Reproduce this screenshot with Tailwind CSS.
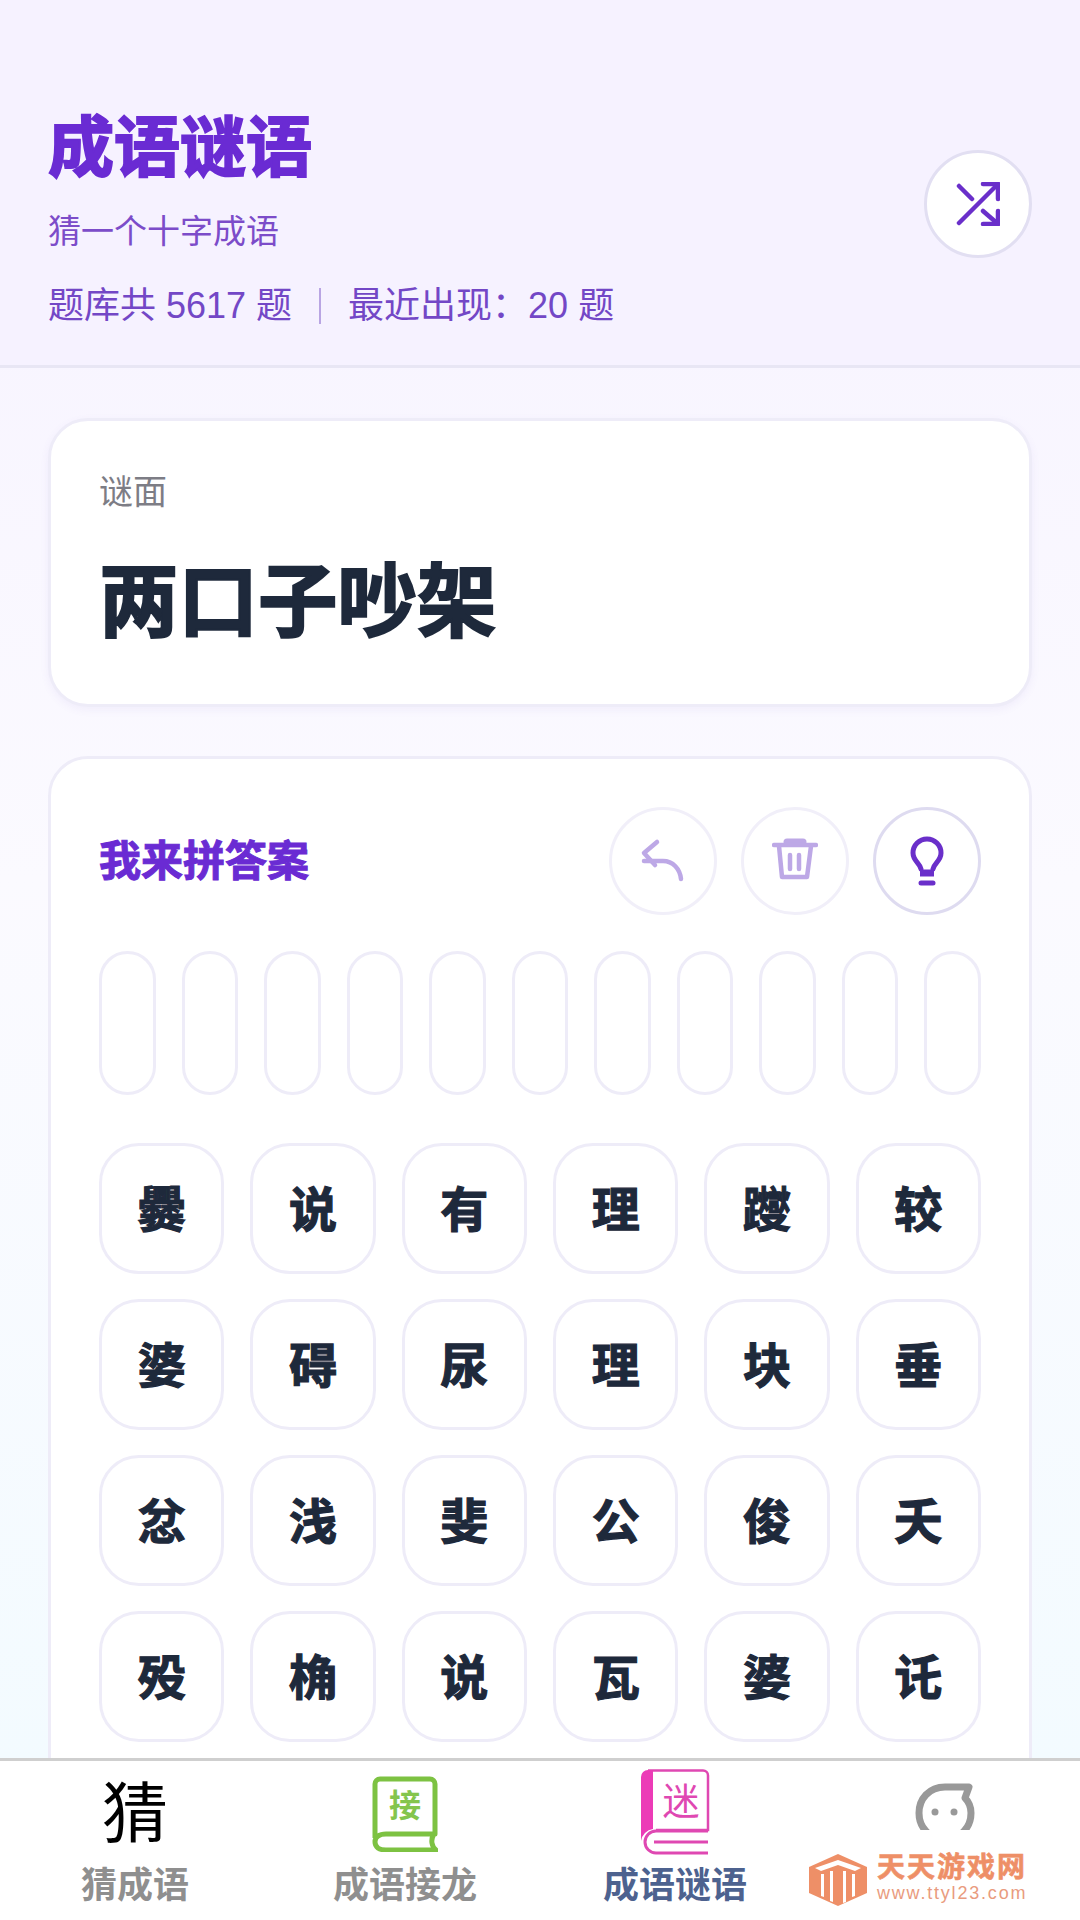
<!doctype html>
<html lang="zh-CN">
<head>
<meta charset="utf-8">
<script src="https://cdn.jsdelivr.net/npm/@tailwindcss/browser@4"></script>
</head>
<body class="m-0">
<div class="w-[1080px] h-[1920px] flex flex-col overflow-hidden font-['Liberation_Sans','Noto_Sans_CJK_SC',sans-serif] bg-white">
  <div class="flex-1 min-h-0 overflow-hidden bg-gradient-to-b from-[#f6f2ff] via-[#fbfaff] to-[#f3fbff]">
    <header class="h-[368px] bg-[#f6f2ff] border-b-[3px] border-[#e8e6f4] px-[48px] pt-[108px] flex justify-between">
      <div>
        <h1 class="text-[66px] leading-[80px] font-bold text-[#6a2bd3] [-webkit-text-stroke:2px_#6a2bd3]">成语谜语</h1>
        <p class="mt-[22px] text-[33px] leading-[44px] text-[#7c4cc9]">猜一个十字成语</p>
        <div class="mt-[30px] flex items-center text-[36px] leading-[44px] text-[#7347c6]">
          <span>题库共 5617 题</span>
          <span class="mx-[27px] w-[2px] h-[36px] bg-[#b9a5e3]"></span>
          <span>最近出现：20 题</span>
        </div>
      </div>
      <button class="mt-[42px] w-[108px] h-[108px] rounded-full bg-white border-[3px] border-[#e2dff2] flex items-center justify-center">
        <svg class="w-[44px] h-[44px]" viewBox="0 0 44 44" fill="none" stroke="#6a2fca" stroke-width="4.5" stroke-linecap="round" stroke-linejoin="round"><path d="M27 2h15v15"/><path d="M3 41 42 2"/><path d="M3 4l13 13"/><path d="M27 29l15 13"/><path d="M42 29v13H27"/></svg>
      </button>
    </header>
    <div class="px-[48px] pt-[50px]">
      <section class="h-[289px] rounded-[40px] bg-white border-[3px] border-[#eeecf8] shadow-[0_3px_8px_rgba(110,90,200,0.07)] px-[48px] pt-[49px]">
        <div class="text-[34px] leading-[44px] text-[#7d7d85]">谜面</div>
        <div class="mt-[39px] text-[79.5px] leading-[100px] font-bold text-[#1e293b] [-webkit-text-stroke:2px_#1e293b]">两口子吵架</div>
      </section>
      <section class="mt-[49px] rounded-[40px] bg-white border-[3px] border-[#eeecf8] px-[48px] pt-[48px] h-[1200px]">
        <div class="flex items-center justify-between h-[108px]">
          <h2 class="text-[42px] font-bold text-[#6a2bd3] [-webkit-text-stroke:1px_#6a2bd3]">我来拼答案</h2>
          <div class="flex gap-[24px]">
            <button class="w-[108px] h-[108px] rounded-full bg-white border-[3px] border-[#f1eff9] flex items-center justify-center">
              <svg class="w-[46px] h-[46px]" viewBox="0 0 46 46" fill="none" stroke="#bda8e6" stroke-width="4.5" stroke-linecap="round" stroke-linejoin="round"><path d="M17 4 4 15l11 12"/><path d="M4 23h19c10 0 17 8 18 18"/></svg>
            </button>
            <button class="w-[108px] h-[108px] rounded-full bg-white border-[3px] border-[#f1eff9] flex items-center justify-center">
              <svg class="w-[46px] h-[46px]" viewBox="0 2 46 46" fill="#bda8e6" stroke="#bda8e6" stroke-width="4.5" stroke-linecap="round" stroke-linejoin="round"><path d="M15 6h16" stroke-width="7"/><path d="M2 9h42" fill="none"/><path d="M7 10l3 31h25l4-31" fill="none"/><path d="M18 19v14" fill="none"/><path d="M27 19v14" fill="none"/></svg>
            </button>
            <button class="w-[108px] h-[108px] rounded-full bg-white border-[3px] border-[#dedbf0] flex items-center justify-center">
              <svg class="w-[36px] h-[52px]" viewBox="0 0 36 52" fill="none" stroke="#6a2fca" stroke-width="5" stroke-linecap="round" stroke-linejoin="round"><path d="M12 34C11 28 4 26 4 18a14 14 0 0 1 28 0c0 8-7 10-8 16"/><path d="M11 38h14" stroke-width="7" stroke-linecap="butt"/><path d="M12 48h12"/></svg>
            </button>
          </div>
        </div>
        <div class="mt-[36px] grid grid-cols-11 gap-[26px]">
          <div class="h-[144px] rounded-full border-[3px] border-[#eeecf8]"></div>
          <div class="h-[144px] rounded-full border-[3px] border-[#eeecf8]"></div>
          <div class="h-[144px] rounded-full border-[3px] border-[#eeecf8]"></div>
          <div class="h-[144px] rounded-full border-[3px] border-[#eeecf8]"></div>
          <div class="h-[144px] rounded-full border-[3px] border-[#eeecf8]"></div>
          <div class="h-[144px] rounded-full border-[3px] border-[#eeecf8]"></div>
          <div class="h-[144px] rounded-full border-[3px] border-[#eeecf8]"></div>
          <div class="h-[144px] rounded-full border-[3px] border-[#eeecf8]"></div>
          <div class="h-[144px] rounded-full border-[3px] border-[#eeecf8]"></div>
          <div class="h-[144px] rounded-full border-[3px] border-[#eeecf8]"></div>
          <div class="h-[144px] rounded-full border-[3px] border-[#eeecf8]"></div>
        </div>
        <div class="mt-[48px] grid grid-cols-6 gap-x-[26px] gap-y-[25px] text-[48px] font-bold text-[#1e293b] [-webkit-text-stroke:1.2px_#1e293b]">
          <div class="h-[131px] pt-[4px] rounded-[40px] border-[3px] border-[#eeecf8] flex items-center justify-center">爨</div>
          <div class="h-[131px] pt-[4px] rounded-[40px] border-[3px] border-[#eeecf8] flex items-center justify-center">说</div>
          <div class="h-[131px] pt-[4px] rounded-[40px] border-[3px] border-[#eeecf8] flex items-center justify-center">有</div>
          <div class="h-[131px] pt-[4px] rounded-[40px] border-[3px] border-[#eeecf8] flex items-center justify-center">理</div>
          <div class="h-[131px] pt-[4px] rounded-[40px] border-[3px] border-[#eeecf8] flex items-center justify-center">躞</div>
          <div class="h-[131px] pt-[4px] rounded-[40px] border-[3px] border-[#eeecf8] flex items-center justify-center">较</div>
          <div class="h-[131px] pt-[4px] rounded-[40px] border-[3px] border-[#eeecf8] flex items-center justify-center">婆</div>
          <div class="h-[131px] pt-[4px] rounded-[40px] border-[3px] border-[#eeecf8] flex items-center justify-center">碍</div>
          <div class="h-[131px] pt-[4px] rounded-[40px] border-[3px] border-[#eeecf8] flex items-center justify-center">尿</div>
          <div class="h-[131px] pt-[4px] rounded-[40px] border-[3px] border-[#eeecf8] flex items-center justify-center">理</div>
          <div class="h-[131px] pt-[4px] rounded-[40px] border-[3px] border-[#eeecf8] flex items-center justify-center">块</div>
          <div class="h-[131px] pt-[4px] rounded-[40px] border-[3px] border-[#eeecf8] flex items-center justify-center">垂</div>
          <div class="h-[131px] pt-[4px] rounded-[40px] border-[3px] border-[#eeecf8] flex items-center justify-center">忿</div>
          <div class="h-[131px] pt-[4px] rounded-[40px] border-[3px] border-[#eeecf8] flex items-center justify-center">浅</div>
          <div class="h-[131px] pt-[4px] rounded-[40px] border-[3px] border-[#eeecf8] flex items-center justify-center">斐</div>
          <div class="h-[131px] pt-[4px] rounded-[40px] border-[3px] border-[#eeecf8] flex items-center justify-center">公</div>
          <div class="h-[131px] pt-[4px] rounded-[40px] border-[3px] border-[#eeecf8] flex items-center justify-center">俊</div>
          <div class="h-[131px] pt-[4px] rounded-[40px] border-[3px] border-[#eeecf8] flex items-center justify-center">夭</div>
          <div class="h-[131px] pt-[4px] rounded-[40px] border-[3px] border-[#eeecf8] flex items-center justify-center">殁</div>
          <div class="h-[131px] pt-[4px] rounded-[40px] border-[3px] border-[#eeecf8] flex items-center justify-center">桷</div>
          <div class="h-[131px] pt-[4px] rounded-[40px] border-[3px] border-[#eeecf8] flex items-center justify-center">说</div>
          <div class="h-[131px] pt-[4px] rounded-[40px] border-[3px] border-[#eeecf8] flex items-center justify-center">瓦</div>
          <div class="h-[131px] pt-[4px] rounded-[40px] border-[3px] border-[#eeecf8] flex items-center justify-center">婆</div>
          <div class="h-[131px] pt-[4px] rounded-[40px] border-[3px] border-[#eeecf8] flex items-center justify-center">讬</div>
        </div>
      </section>
    </div>
  </div>
  <nav class="relative h-[162px] shrink-0 bg-white border-t-[3px] border-[#cfcfcf] grid grid-cols-4">
    <div class="flex flex-col items-center">
      <div class="h-[103px] pb-[10px] flex items-center justify-center text-[66px] leading-none text-black font-['Noto_Sans_CJK_JP',sans-serif]">猜</div>
      <div class="text-[36px] leading-[44px] font-bold text-[#8f8f8f]">猜成语</div>
    </div>
    <div class="flex flex-col items-center">
      <div class="relative h-[103px] w-[66px] pt-[15px]">
        <svg class="w-[66px] h-[76px]" viewBox="0 0 66 76" fill="none"><path d="M3 62V8a5 5 0 0 1 5-5h50a5 5 0 0 1 5 5v50H14c-7 0-11 3-11 8s4 8 11 8h50c-4-3-6-10-2-16" stroke="#7dc242" stroke-width="5" stroke-linejoin="round"/></svg>
        <div class="absolute left-0 right-0 top-[25px] text-center text-[32px] leading-[40px] font-bold text-[#84c54d]">接</div>
      </div>
      <div class="text-[36px] leading-[44px] font-bold text-[#8f8f8f]">成语接龙</div>
    </div>
    <div class="flex flex-col items-center">
      <div class="relative h-[103px] w-[70px] pt-[8px]">
        <svg class="w-[70px] h-[86px]" viewBox="0 0 70 86" fill="none"><path d="M8 1.5h55a5 5 0 0 1 5 5V61H16" stroke="#df48b2" stroke-width="2.5"/><path d="M1 72V8a7 7 0 0 1 7-7h5v59a14 14 0 0 0-12 12z" fill="#ec3bb7"/><path d="M68 62H16a11 11 0 0 0 0 22h52" stroke="#df48b2" stroke-width="3"/><path d="M14 73h54" stroke="#df48b2" stroke-width="3"/></svg>
        <div class="absolute left-[16px] w-[50px] top-[20px] text-center text-[37px] leading-[44px] text-[#df48b2]">迷</div>
      </div>
      <div class="text-[36px] leading-[44px] font-bold text-[#4d628f]">成语谜语</div>
    </div>
    <div class="flex flex-col items-center">
      <div class="mt-[22px] w-[60px] h-[47px] overflow-hidden">
        <svg class="w-[60px] h-[60px]" viewBox="0 0 60 60" fill="none"><path d="M54 4H30C14 4 4 16 4 30s10 26 26 26 26-12 26-26c0-6-2-11-6-15z" stroke="#999" stroke-width="7" stroke-linejoin="round"/><circle cx="20" cy="29" r="3.5" fill="#999"/><circle cx="39" cy="29" r="3.5" fill="#999"/></svg>
      </div>
    </div>
    <div class="absolute left-[809px] top-[93px] flex items-start gap-[10px]">
      <svg class="w-[58px] h-[52px]" viewBox="0 0 58 52"><path d="M29 0 58 13v26L29 52 0 39V13z" fill="#ee8f67"/><path d="M6 14 29 6l23 8-6 3-17-6-17 6zM12 20h3v23l-3-1zM21 17h3v31l-3-1zM34 17h3v31l-3 1zM43 20h3v22l-3 1z" fill="#fff"/></svg>
      <div>
        <div class="text-[28px] leading-[28px] font-bold tracking-[2px] text-[#ee8f67] [-webkit-text-stroke:0.6px_#ee8f67]">天天游戏网</div>
        <div class="mt-[2px] text-[18px] leading-[18px] tracking-[1.8px] text-[#e99b7e]">www.ttyl23.com</div>
      </div>
    </div>
  </nav>
</div>
</body>
</html>
